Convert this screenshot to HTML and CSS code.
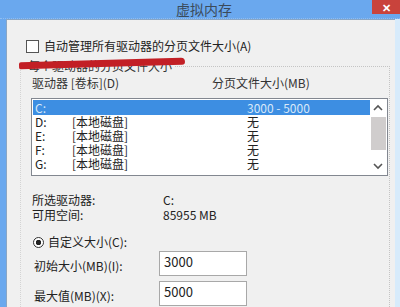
FILE: index.html
```html
<!DOCTYPE html>
<html lang="zh-CN">
<head>
    <meta charset="UTF-8">
    <title>虚拟内存</title>
    <link rel="stylesheet" href="styles.css">
</head>
<body>
    <div class="window">
        <div class="titlebar">
            <span class="title">虚拟内存</span>
            <span class="close">&#x2715;</span>
        </div>
        <div class="frame">
            <div class="dialog">
                <label class="auto">
                    <span class="checkbox"></span>
                    自动管理所有驱动器的分页文件大小(A)
                </label>

                <div class="group">
                    <span class="legend">每个驱动器的分页文件大小</span>
                    <span class="scribble"></span>

                    <div class="heads">
                        <span class="col-drive">驱动器 [卷标](D)</span>
                        <span class="col-size">分页文件大小(MB)</span>
                    </div>

                    <div class="listbox">
                        <div class="rows">
                            <div class="row selected"><span class="drive">C:</span><span class="vol"></span><span class="size">3000 - 5000</span></div>
                            <div class="row"><span class="drive">D:</span><span class="vol">[本地磁盘]</span><span class="size">无</span></div>
                            <div class="row"><span class="drive">E:</span><span class="vol">[本地磁盘]</span><span class="size">无</span></div>
                            <div class="row"><span class="drive">F:</span><span class="vol">[本地磁盘]</span><span class="size">无</span></div>
                            <div class="row"><span class="drive">G:</span><span class="vol">[本地磁盘]</span><span class="size">无</span></div>
                        </div>
                        <div class="scrollbar">
                            <svg class="arrow" width="10" height="8" viewBox="0 0 10 8"><path d="M1 6 L5 2 L9 6" fill="none" stroke="#555" stroke-width="1.6"/></svg>
                            <div class="thumb"></div>
                            <svg class="arrow" width="10" height="8" viewBox="0 0 10 8"><path d="M1 2 L5 6 L9 2" fill="none" stroke="#555" stroke-width="1.6"/></svg>
                        </div>
                    </div>

                    <div class="info">
                        <div class="info-row"><span class="info-label">所选驱动器:</span><span>C:</span></div>
                        <div class="info-row"><span class="info-label">可用空间:</span><span>85955 MB</span></div>
                    </div>

                    <label class="custom">
                        <span class="radio"></span>
                        自定义大小(C):
                    </label>

                    <div class="field">
                        <span class="field-label">初始大小(MB)(I):</span>
                        <span class="input">3000</span>
                    </div>
                    <div class="field">
                        <span class="field-label">最大值(MB)(X):</span>
                        <span class="input">5000</span>
                    </div>
                </div>
            </div>
        </div>
    </div>
</body>
</html>
```

FILE: styles.css
```css
body {
    margin: 0;
    font-family: "Noto Sans CJK SC", "Noto Sans", sans-serif;
    font-size: 12px;
    line-height: 14px;
    color: #222;
    overflow: hidden;
}

.window {
    width: 400px;
    height: 307px;
    background-color: #6aa8ee;
    display: flex;
    flex-direction: column;
}

.titlebar {
    height: 20px;
    position: relative;
    display: flex;
    justify-content: center;
    align-items: center;
    border-bottom: 1px dotted #8ebdf2;
}

.title {
    font-size: 14px;
    line-height: 18px;
    color: #3b4a5a;
    margin-left: 8px;
}

.close {
    position: absolute;
    right: 0;
    top: 0;
    width: 28px;
    height: 14px;
    background-color: #c9433c;
    color: #fff;
    font-size: 11px;
    line-height: 14px;
    text-align: center;
    font-weight: bold;
}

.frame {
    flex: 1;
    display: flex;
    padding-left: 6px;
    padding-right: 5px;
    background: linear-gradient(to right, #6aa8ee 0 6px, transparent 6px calc(100% - 5px), #d7ebfb calc(100% - 5px));
}

.dialog {
    flex: 1;
    background-color: #f0f0f0;
    border-top: 1px solid #8aa6c4;
    border-left: 1px solid #8aa6c4;
    padding: 19px 0 0 19px;
}

.auto {
    display: flex;
    align-items: center;
    gap: 5px;
    height: 14px;
}

.checkbox {
    width: 11px;
    height: 11px;
    border: 1px solid #555;
    background-color: #fff;
}

.group {
    position: relative;
    margin-top: 13px;
    margin-right: 5px;
    margin-left: -6px;
    border-top: 1px dotted #c4c4c4;
    border-left: 1px dotted #d4d4d4;
    border-right: 1px dotted #c4c4c4;
    padding: 8px 0 0 10px;
    height: 240px;
}

.legend {
    position: absolute;
    left: 4px;
    top: -9px;
    padding: 0 3px;
    line-height: 16px;
    background-color: #f0f0f0;
    color: #333;
}

.scribble {
    position: absolute;
    left: -2px;
    top: -7px;
    width: 166px;
    height: 7px;
    background-color: #c21f25;
    border-radius: 4px 8px 6px 3px;
    transform: rotate(-1.6deg);
}

.heads {
    display: flex;
    height: 16px;
    align-items: center;
    color: #333;
}

.col-drive {
    width: 180px;
    margin-left: 1px;
}

.listbox {
    margin-top: 7px;
    width: 357px;
    height: 78px;
    border: 1px solid #828790;
    background-color: #fff;
    display: flex;
    padding: 1px;
    box-sizing: border-box;
}

.rows {
    flex: 1;
}

.row {
    display: flex;
    height: 14px;
    align-items: center;
    padding-left: 2px;
}

.row.selected {
    background-color: #3d8ee2;
    color: #d8e8f8;
    height: 15px;
}

.drive {
    width: 37px;
}

.vol {
    width: 175px;
}

.scrollbar {
    width: 16px;
    display: flex;
    flex-direction: column;
    align-items: center;
    padding-top: 4px;
}

.arrow {
    flex: none;
}

.thumb {
    width: 15px;
    height: 33px;
    margin: 5px 0 12px;
    background-color: #d0cdcd;
}

.info {
    margin-top: 16px;
    margin-left: 1px;
}

.info-row {
    display: flex;
    height: 15px;
    align-items: center;
}

.info-label {
    width: 131px;
}

.custom {
    display: flex;
    align-items: center;
    gap: 4px;
    margin-top: 13px;
    margin-left: 2px;
    height: 14px;
}

.radio {
    width: 9px;
    height: 9px;
    border: 1px solid #333;
    border-radius: 50%;
    background: radial-gradient(circle, #222 0 2.5px, #fff 3px);
}

.field {
    display: flex;
    align-items: center;
    margin-top: 2px;
    margin-left: 3px;
}

.field + .field {
    margin-top: 5px;
}

.field-label {
    width: 125px;
    padding-top: 4px;
}

.input {
    width: 88px;
    height: 25px;
    border: 1px solid #a8a8a8;
    background-color: #fff;
    padding: 3px 0 0 4px;
    box-sizing: border-box;
    font-size: 13px;
}
```
